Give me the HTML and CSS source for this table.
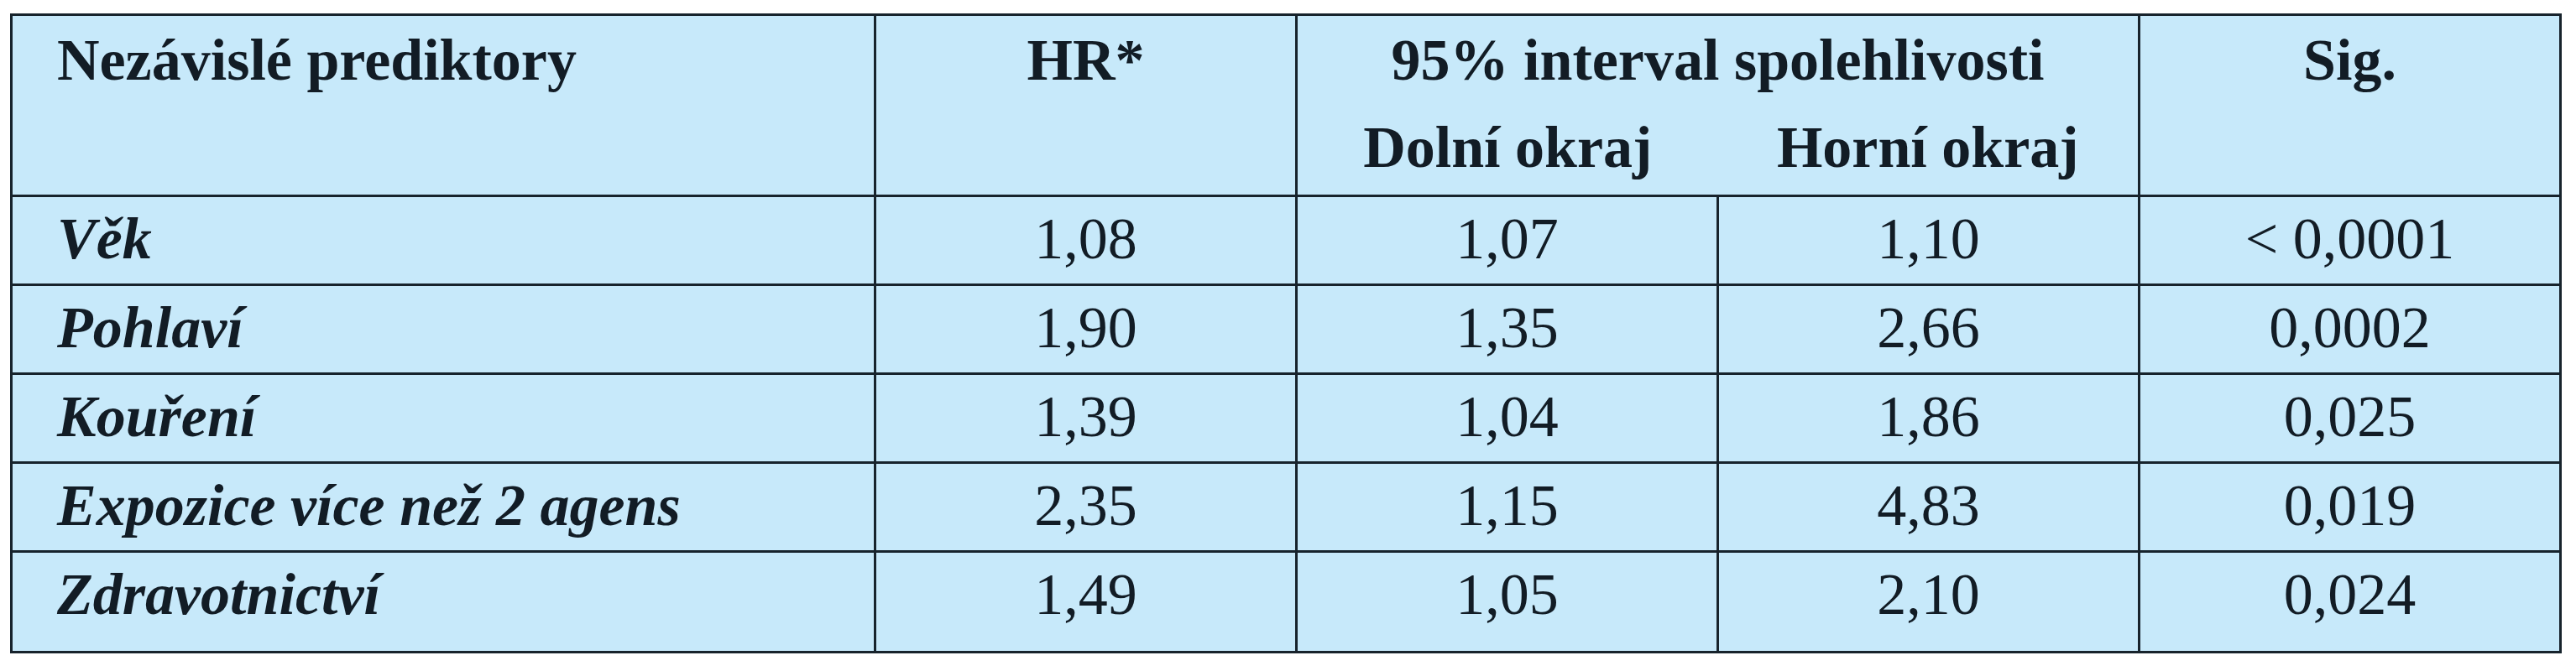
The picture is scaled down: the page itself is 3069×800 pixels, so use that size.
FILE: index.html
```html
<!DOCTYPE html>
<html lang="cs">
<head>
<meta charset="utf-8">
<title>Nezávislé prediktory</title>
<link rel="stylesheet" href="styles.css">
</head>
<body>
<table class="pred">
  <colgroup>
    <col class="c-label">
    <col class="c-num">
    <col class="c-num">
    <col class="c-num">
    <col class="c-sig">
  </colgroup>
  <thead>
    <tr class="h1">
      <th rowspan="2" class="lab">Nezávislé prediktory</th>
      <th rowspan="2">HR*</th>
      <th colspan="2">95% interval spolehlivosti</th>
      <th rowspan="2">Sig.</th>
    </tr>
    <tr class="h2">
      <th class="sub">Dolní okraj</th>
      <th class="sub">Horní okraj</th>
    </tr>
  </thead>
  <tbody>
    <tr>
      <td class="lab">Věk</td><td>1,08</td><td>1,07</td><td class="hi">1,10</td><td>&lt; 0,0001</td>
    </tr>
    <tr>
      <td class="lab">Pohlaví</td><td>1,90</td><td>1,35</td><td class="hi">2,66</td><td>0,0002</td>
    </tr>
    <tr>
      <td class="lab">Kouření</td><td>1,39</td><td>1,04</td><td class="hi">1,86</td><td>0,025</td>
    </tr>
    <tr>
      <td class="lab">Expozice více než 2 agens</td><td>2,35</td><td>1,15</td><td class="hi">4,83</td><td>0,019</td>
    </tr>
    <tr class="last">
      <td class="lab">Zdravotnictví</td><td>1,49</td><td>1,05</td><td class="hi">2,10</td><td>0,024</td>
    </tr>
  </tbody>
</table>
</body>
</html>
```
FILE: styles.css
```css
html, body {
  margin: 0;
  padding: 0;
  background: #ffffff;
}

body {
  padding: 16px 0 0 12px;
  font-family: "Liberation Serif", "Times New Roman", serif;
  color: #121c25;
}

.pred {
  border-collapse: collapse;
  table-layout: fixed;
  width: 3037px;
  background: #c7e9fa;
  font-size: 70px;
  line-height: 80px;
}

.c-label { width: 1029px; }
.c-num { width: 502px; }
.c-sig { width: 502px; }

.pred th,
.pred td {
  border: 3px solid #17232c;
  text-align: center;
  vertical-align: top;
  white-space: nowrap;
  padding: 0;
}

.pred th {
  font-weight: bold;
}

.pred .h1 th {
  padding-top: 13px;
  border-bottom: 0;
}

.pred .h1 th[rowspan] {
  border-bottom: 3px solid #17232c;
}

.pred .h2 th {
  padding-top: 24px;
  padding-bottom: 16px;
  border-top: 0;
}

.pred .h2 th.sub:first-child,
.pred .h2 th.sub {
  border-left: 0;
  border-right: 0;
}

.pred .h2 th.sub:first-child {
  border-left: 2px solid #17232c;
}

.pred .h2 th.sub + th.sub {
  border-right: 2px solid #17232c;
}

.pred td {
  font-weight: normal;
  padding-top: 10px;
  padding-bottom: 13px;
}

.pred .last td {
  padding-bottom: 27px;
}

.pred .lab {
  text-align: left;
  padding-left: 53px;
}

.pred td.lab {
  font-weight: bold;
  font-style: italic;
}

.pred td.hi {
  border-left-width: 2px;
}
```
